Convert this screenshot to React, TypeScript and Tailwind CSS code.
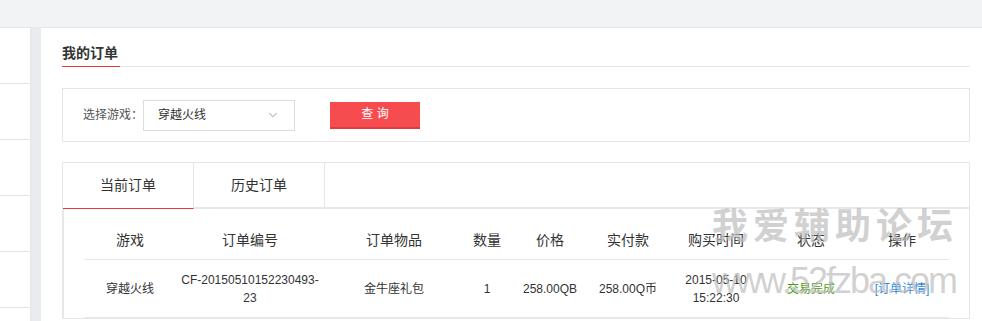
import { ChevronDown } from "lucide-react";

const COLUMNS = [
  { label: "游戏", w: "w-[92px]" },
  { label: "订单编号", w: "w-[148px]" },
  { label: "订单物品", w: "w-[140px]" },
  { label: "数量", w: "w-[46px]" },
  { label: "价格", w: "w-[80px]" },
  { label: "实付款", w: "w-[76px]" },
  { label: "购买时间", w: "w-[100px]" },
  { label: "状态", w: "w-[90px]" },
  { label: "操作", w: "w-[92px]" },
];

export default function App() {
  return (
    <div
      className="relative flex h-[321px] w-[982px] flex-col overflow-hidden bg-[#f2f3f5] text-[#333]"
      style={{ fontFamily: '"Liberation Sans", "Noto Sans CJK SC", sans-serif' }}
    >
      <div className="h-[27px] shrink-0" />
      <div className="flex flex-1">
        {/* left menu */}
        <div className="w-[31px] shrink-0 border-r border-t border-[#e4e6eb] bg-white">
          {[0, 1, 2, 3, 4].map((i) => (
            <div key={i} className="h-[56px] border-b border-[#e4e6eb]" />
          ))}
        </div>
        <div className="w-[10px] shrink-0 bg-[#e9ebf0]" />

        {/* main */}
        <div className="flex-1 border-t border-[#e4e6eb] bg-white pl-[21px] pr-[12px]">
          <div className="mt-[13px] border-b border-[#e6e6e6]">
            <span className="-mb-px inline-block w-[58px] border-b border-[#e4393c] pb-[3px] text-[14px] font-bold leading-[20px]">
              我的订单
            </span>
          </div>

          <div className="mt-[21px] flex h-[54px] items-center border border-[#e5e6ea] pl-[20px]">
            <span className="text-[12px] text-[#555]">选择游戏：</span>
            <div className="flex h-[31px] w-[152px] items-center justify-between border border-[#dcdcdc] pl-[14px] pr-[14px] text-[12px]">
              <span>穿越火线</span>
              <ChevronDown size={14} strokeWidth={2} className="text-[#c8c8c8]" />
            </div>
            <button className="ml-[35px] h-[27px] w-[90px] border-b-2 border-[#e03b3d] bg-[#f74c4f] text-[12px] text-white">
              查 询
            </button>
          </div>

          <div className="mt-[20px] border border-[#e4e6ec]">
            <div className="flex h-[46px] text-[14px]">
              <div className="flex w-[131px] items-center justify-center border-r border-b border-r-[#e4e6ec] border-b-[#e4393c]">
                当前订单
              </div>
              <div className="flex w-[131px] items-center justify-center border-r border-b-2 border-r-[#e4e6ec] border-b-[#e6e8ee]">
                历史订单
              </div>
              <div className="flex-1 border-b-2 border-[#e6e8ee]" />
            </div>
            <div className="border-l border-[#e6e8ee] pl-[20px] pr-[20px] pt-[12px]">
              <div className="flex h-[39px] items-center border-b border-[#e6e8ee] text-[14px]">
                {COLUMNS.map((c) => (
                  <div key={c.label} className={`${c.w} text-center`}>
                    {c.label}
                  </div>
                ))}
              </div>
              <div className="flex h-[58px] items-center border-b border-[#e6e8ee] text-[12px] leading-[18px]">
                <div className="w-[92px] text-center">穿越火线</div>
                <div className="w-[148px] text-center">
                  CF-20150510152230493-
                  <br />
                  23
                </div>
                <div className="w-[140px] text-center">金牛座礼包</div>
                <div className="w-[46px] text-center">1</div>
                <div className="w-[80px] text-center">258.00QB</div>
                <div className="w-[76px] text-center">258.00Q币</div>
                <div className="w-[100px] text-center">
                  2015-05-10
                  <br />
                  15:22:30
                </div>
                <div className="w-[90px] text-center text-[#4e9a18]">交易完成</div>
                <div className="w-[92px] text-center text-[#2c8be6]">[订单详情]</div>
              </div>
            </div>
          </div>
        </div>
      </div>

      {/* watermark */}
      <div className="pointer-events-none absolute left-[712px] top-[205px] text-[36px] font-bold leading-[44px] tracking-[5px] text-[#bdbdbd]/70">
        我爱辅助论坛
      </div>
      <div className="pointer-events-none absolute left-[712px] top-[259px] text-[36px] font-light leading-[44px] tracking-[-2px] text-[#bdbdbd]/70">
        www.52fzba.com
      </div>
    </div>
  );
}
